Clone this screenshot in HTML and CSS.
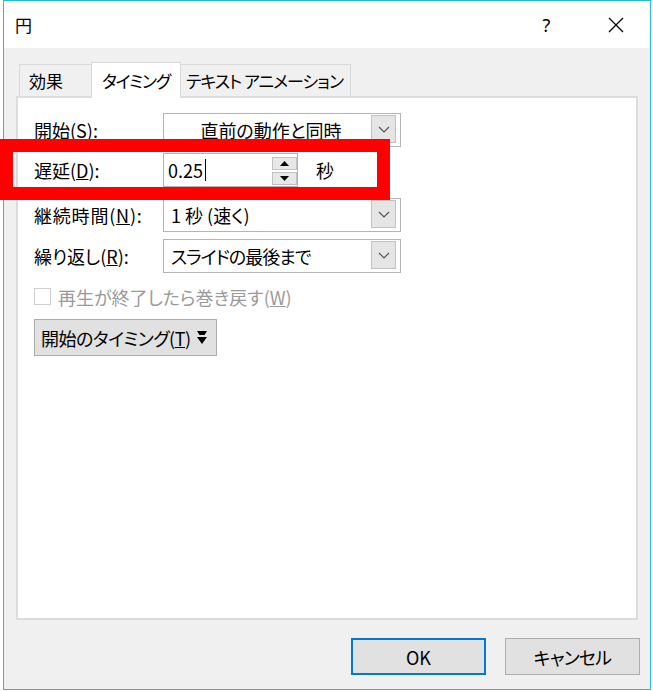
FILE: index.html
```html
<!DOCTYPE html>
<html lang="ja">
<head>
<meta charset="utf-8">
<title>円</title>
<link rel="stylesheet" href="styles.css">
</head>
<body>
<div class="window">
  <div class="titlebar">
    <span class="title">円</span>
    <span class="cap help">?</span>
    <span class="cap close"><svg width="16" height="16" viewBox="0 0 16 16"><path d="M1 1L15 15M15 1L1 15" stroke="#000" stroke-width="1.3" fill="none"/></svg></span>
  </div>
  <div class="tabs">
    <div class="tab t1">効果</div>
    <div class="tab t2">タイミング</div>
    <div class="tab t3">テキスト アニメーション</div>
  </div>
  <div class="panel">
    <div class="row r1">
      <span class="lbl">開始(<u>S</u>):</span>
      <div class="combo center"><span class="val">直前の動作と同時</span><span class="drop"><svg width="12" height="7" viewBox="0 0 12 7"><path d="M1 1L6 6L11 1" stroke="#555" stroke-width="1.2" fill="none"/></svg></span></div>
    </div>
    <div class="row r2">
      <span class="lbl">遅延(<u>D</u>):</span>
      <div class="spin-input"><span class="val">0.25<span class="caret"></span></span>
        <span class="spinner">
          <span class="sbtn"><svg width="9" height="5" viewBox="0 0 9 5"><path d="M0 5L4.5 0L9 5Z" fill="#000"/></svg></span>
          <span class="sbtn"><svg width="9" height="5" viewBox="0 0 9 5"><path d="M0 0L4.5 5L9 0Z" fill="#000"/></svg></span>
        </span>
      </div>
      <span class="unit">秒</span>
    </div>
    <div class="row r3">
      <span class="lbl">継続時間(<u>N</u>):</span>
      <div class="combo"><span class="val">1 秒 (速く)</span><span class="drop"><svg width="12" height="7" viewBox="0 0 12 7"><path d="M1 1L6 6L11 1" stroke="#555" stroke-width="1.2" fill="none"/></svg></span></div>
    </div>
    <div class="row r4">
      <span class="lbl">繰り返し(<u>R</u>):</span>
      <div class="combo"><span class="val kana">スライドの最後まで</span><span class="drop"><svg width="12" height="7" viewBox="0 0 12 7"><path d="M1 1L6 6L11 1" stroke="#555" stroke-width="1.2" fill="none"/></svg></span></div>
    </div>
    <div class="check"><span class="box"></span><span>再生が終了したら巻き戻す(<u>W</u>)</span></div>
    <button class="trigger"><span class="kana">開始のタイミング(<u>T</u>)</span><svg class="dbl" width="10" height="13" viewBox="0 0 10 13"><path d="M0 0H10L7.5 4H2.5Z" fill="#000"/><path d="M0 6H10L5 13Z" fill="#000"/></svg></button>
  </div>
  <div class="footer">
    <button class="btn ok">OK</button>
    <button class="btn kana">キャンセル</button>
  </div>
</div>
<div class="annot"></div>
</body>
</html>
```
FILE: styles.css
```css
body {
  margin: 0;
  background: #fff;
  position: relative;
  font-family: "Noto Sans CJK JP", "Noto Sans", sans-serif;
  font-feature-settings: "palt";
  color: #000;
}

.window {
  margin-left: 3px;
  width: 648px;
  height: 690px;
  box-sizing: border-box;
  border: 1px solid #1cc2d9;
  background: #f0f0f0;
  display: flex;
  flex-direction: column;
}

.titlebar {
  height: 47px;
  flex: none;
  background: #fff;
  display: flex;
}

.title {
  flex: 1;
  padding-left: 11px;
  font-size: 17px;
  display: flex;
  align-items: center;
}

.cap {
  width: 69px;
  display: flex;
  align-items: center;
  justify-content: center;
}

.help {
  font-family: "Noto Sans", sans-serif;
  font-size: 18px;
}

.tabs {
  display: flex;
  align-items: flex-end;
  height: 34px;
  margin: 14px 0 0 15px;
  position: relative;
  z-index: 1;
  flex: none;
}

.tab {
  box-sizing: border-box;
  height: 32px;
  border: 1px solid #d9d9d9;
  border-bottom: none;
  background: #f0f0f0;
  font-size: 17px;
  letter-spacing: -0.6px;
  display: flex;
  align-items: center;
  white-space: nowrap;
}

.t1 {
  width: 73px;
  padding-left: 9px;
  letter-spacing: 0;
}

.t2 {
  width: 90px;
  height: 36px;
  margin-left: -1px;
  margin-bottom: -2px;
  background: #fff;
  padding-left: 10px;
  letter-spacing: -1.3px;
}

.t3 {
  width: 171px;
  margin-left: -1px;
  padding-left: 5px;
  letter-spacing: -1px;
}

.panel {
  margin: 0 12px;
  height: 524px;
  flex: none;
  box-sizing: border-box;
  border: 2px solid #dcdcdc;
  background: #fff;
  padding: 15px 0 0 16px;
}

.row {
  display: flex;
  align-items: center;
  height: 34px;
}

.r2 { margin-top: 6px; }
.r3 { margin-top: 11px; }
.r4 { margin-top: 7px; }

.lbl {
  width: 129px;
  flex: none;
  font-size: 18px;
  white-space: nowrap;
}

.r3 .lbl {
  letter-spacing: 0.8px;
}

.combo {
  box-sizing: border-box;
  width: 238px;
  height: 34px;
  border: 1px solid #b4b4b4;
  display: flex;
  align-items: center;
  font-size: 18px;
  padding-left: 7px;
}

.combo .val {
  flex: 1;
  white-space: nowrap;
}

.combo .val.kana {
  letter-spacing: -1px;
}

.combo.center .val {
  text-align: center;
}

.drop {
  width: 25px;
  height: 28px;
  box-sizing: border-box;
  border: 1px solid #c2c2c2;
  background: #e5e5e5;
  display: flex;
  align-items: center;
  justify-content: center;
  margin-right: 4px;
  margin-top: -2px;
}

.spin-input {
  box-sizing: border-box;
  width: 135px;
  height: 34px;
  border: 1px solid #b4b4b4;
  display: flex;
  align-items: center;
  padding-left: 4px;
  font-size: 18px;
}

.spin-input .val {
  flex: 1;
  display: flex;
  align-items: center;
}

.caret {
  display: inline-block;
  width: 1px;
  height: 22px;
  background: #000;
  margin-left: 2px;
}

.spinner {
  display: flex;
  flex-direction: column;
  gap: 2px;
  margin-top: 2px;
}

.sbtn {
  width: 25px;
  height: 13px;
  box-sizing: border-box;
  border: 1px solid #c2c2c2;
  background: #e8e8e8;
  display: flex;
  align-items: center;
  justify-content: center;
}

.unit {
  margin-left: 18px;
  font-size: 18px;
}

.check {
  display: flex;
  align-items: center;
  margin-top: 15px;
  color: #9a9a9a;
  font-size: 18px;
  height: 17px;
  white-space: nowrap;
}

.box {
  width: 17px;
  height: 17px;
  box-sizing: border-box;
  border: 1px solid #cfcfcf;
  background: #fff;
  margin-right: 7px;
}

.trigger {
  margin-top: 14px;
  width: 183px;
  height: 37px;
  box-sizing: border-box;
  border: 1px solid #adadad;
  background: #e1e1e1;
  display: flex;
  align-items: center;
  padding: 0 0 0 6px;
  font-family: inherit;
  font-feature-settings: "palt";
  font-size: 18px;
  color: #000;
  white-space: nowrap;
}

.trigger .kana {
  letter-spacing: -0.5px;
}

.dbl {
  margin-left: 6px;
}

.footer {
  display: flex;
  justify-content: flex-end;
  gap: 19px;
  margin: 18px 10px 0 0;
}

.btn {
  width: 135px;
  height: 37px;
  box-sizing: border-box;
  border: 1px solid #adadad;
  background: #e1e1e1;
  font-family: inherit;
  font-feature-settings: "palt";
  font-size: 18px;
  color: #000;
  padding: 0;
}

.btn.kana {
  letter-spacing: -0.8px;
}

.btn.ok {
  border: 2px solid #0078d7;
}

.annot {
  position: absolute;
  left: 0;
  top: 139px;
  width: 390px;
  height: 61px;
  box-sizing: border-box;
  border: 13px solid #ff0000;
}
```
